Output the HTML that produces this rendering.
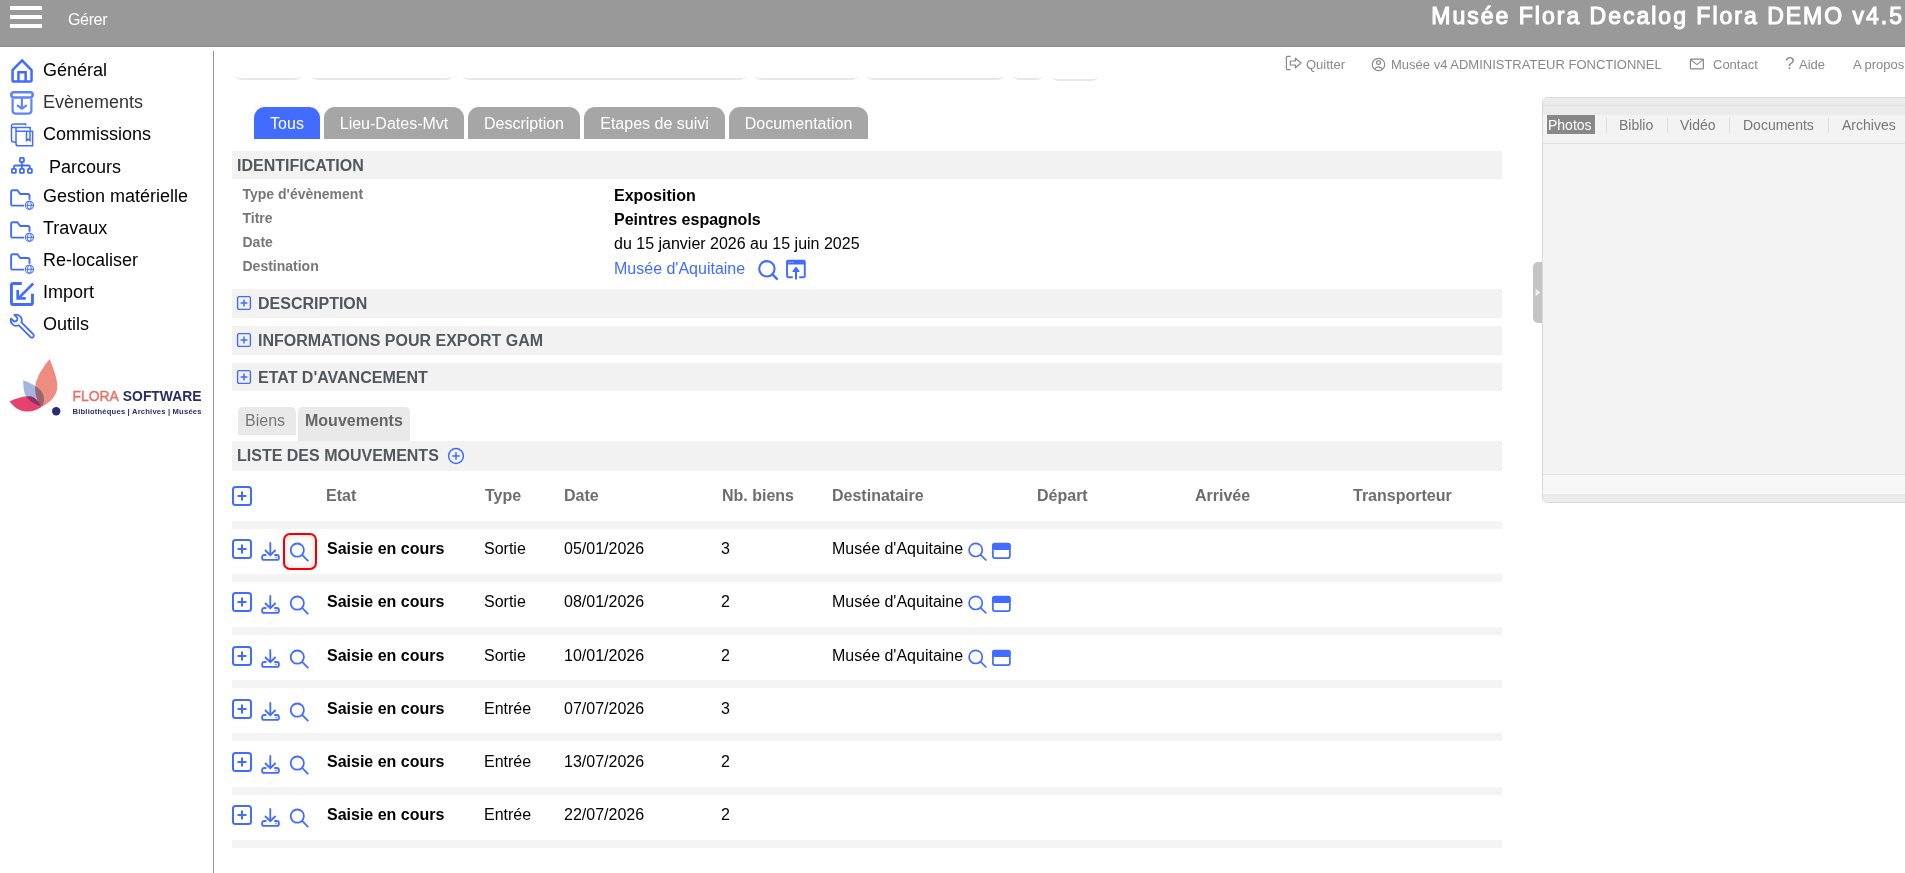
<!DOCTYPE html>
<html><head><meta charset="utf-8">
<style>
*{box-sizing:border-box;margin:0;padding:0}
html,body{width:1905px;height:873px;overflow:hidden;background:#fff;font-family:"Liberation Sans",sans-serif;position:relative}
.a{position:absolute}
.t{position:absolute;white-space:nowrap;line-height:normal}
.hdr{left:0;top:0;width:1905px;height:47px;background:#999}
.bar{left:10px;width:32px;height:4px;background:#fff}
.side .t{font-size:18px;color:#000}
.tab{top:107px;height:32px;border-radius:11px 11px 0 0;background:#a6a6a6;color:#fff;font-size:16px;text-align:center;line-height:33px}
.band{left:232px;width:1270px;background:#f2f2f2}
.sec{font-size:16px;font-weight:bold;color:#51585b}
.lbl{font-size:14px;font-weight:bold;color:#777;left:242.5px}
.val{font-size:16px;color:#000;left:614px}
.th{font-size:16px;font-weight:bold;color:#6d6d6d}
.td{font-size:16px;color:#000}
.stripe{left:232px;width:1270px;height:8px;background:#f4f4f4}
.nav{font-size:13px;color:#888}
.pill{top:75px;height:5px;border-radius:0 0 8px 8px/0 0 4px 4px;border-bottom:2px solid #e8e8e8}
svg{position:absolute;overflow:visible}
.ptab{font-size:14px;color:#777}
.psep{top:118px;width:1px;height:15px;background:#dcdcdc}
</style></head><body>

<!-- header -->
<div class="a hdr"></div>
<div class="a" style="left:0;top:46px;width:1905px;height:1px;background:#8e8e8e"></div>
<div class="a bar" style="top:6px"></div>
<div class="a bar" style="top:15px"></div>
<div class="a bar" style="top:24px"></div>
<div class="t" style="left:68px;top:11px;font-size:16px;letter-spacing:-0.35px;color:#fff">Gérer</div>
<div class="t" id="title" style="right:1px;top:3px;font-size:23px;letter-spacing:2px;-webkit-text-stroke:1.1px #fff;color:#fff">Musée Flora Decalog Flora DEMO v4.5</div>

<!-- sidebar -->
<div class="a" style="left:213px;top:51px;width:1px;height:822px;background:#999"></div>
<div class="side">
<div class="t" style="left:43px;top:60px">Général</div>
<div class="t" style="left:43px;top:92px;color:#333">Evènements</div>
<div class="t" style="left:43px;top:124px">Commissions</div>
<div class="t" style="left:49px;top:157px">Parcours</div>
<div class="t" style="left:43px;top:186px">Gestion matérielle</div>
<div class="t" style="left:43px;top:218px">Travaux</div>
<div class="t" style="left:43px;top:250px">Re-localiser</div>
<div class="t" style="left:43px;top:282px">Import</div>
<div class="t" style="left:43px;top:314px">Outils</div>
</div>

<!-- top nav -->
<div class="t nav" style="left:1306px;top:57px">Quitter</div>
<div class="t nav" style="left:1391px;top:57px">Musée v4 ADMINISTRATEUR FONCTIONNEL</div>
<div class="t nav" style="left:1713px;top:57px">Contact</div>
<div class="t nav" style="left:1785px;top:54px;font-size:17px">?</div>
<div class="t nav" style="left:1799px;top:57px">Aide</div>
<div class="t nav" style="left:1853px;top:57px">A propos</div>

<!-- pills -->
<div class="a pill" style="left:235px;width:67px"></div>
<div class="a pill" style="left:312px;width:141px"></div>
<div class="a pill" style="left:463px;width:283px"></div>
<div class="a pill" style="left:754px;width:104px"></div>
<div class="a pill" style="left:866px;width:138px"></div>
<div class="a pill" style="left:1013px;width:30px"></div>
<div class="a pill" style="left:1052px;width:46px;top:76px"></div>

<!-- tabs -->
<div class="a tab" style="left:254px;width:66px;background:#416cff">Tous</div>
<div class="a tab" style="left:324px;width:140px">Lieu-Dates-Mvt</div>
<div class="a tab" style="left:468px;width:112px">Description</div>
<div class="a tab" style="left:584px;width:141px">Etapes de suivi</div>
<div class="a tab" style="left:729px;width:139px">Documentation</div>

<!-- identification -->
<div class="a band" style="top:151px;height:28px"></div>
<div class="t sec" style="left:237px;top:157px">IDENTIFICATION</div>
<div class="t lbl" style="top:186px">Type d'évènement</div>
<div class="t lbl" style="top:210px">Titre</div>
<div class="t lbl" style="top:234px">Date</div>
<div class="t lbl" style="top:258px">Destination</div>
<div class="t val" style="top:187px;font-weight:bold">Exposition</div>
<div class="t val" style="top:211px;font-weight:bold">Peintres espagnols</div>
<div class="t val" style="top:235px">du 15 janvier 2026 au 15 juin 2025</div>
<div class="t val" style="top:260px;color:#416cff">Musée d'Aquitaine</div>

<div class="a band" style="top:289px;height:29px"></div>
<div class="t sec" style="left:258px;top:295px">DESCRIPTION</div>
<div class="a band" style="top:326px;height:29px"></div>
<div class="t sec" style="left:258px;top:332px">INFORMATIONS POUR EXPORT GAM</div>
<div class="a band" style="top:363px;height:28px"></div>
<div class="t sec" style="left:258px;top:369px">ETAT D'AVANCEMENT</div>

<!-- sub tabs -->
<div class="a" style="left:238px;top:407px;width:58px;height:28px;background:#e9e9e9;border-radius:5px 5px 0 0"></div>
<div class="t" style="left:245px;top:412px;font-size:16px;color:#777">Biens</div>
<div class="a" style="left:298px;top:407px;width:112px;height:34px;background:#e9e9e9;border-radius:5px 5px 0 0"></div>
<div class="t" style="left:305px;top:412px;font-size:16px;font-weight:bold;color:#666">Mouvements</div>

<div class="a band" style="top:441px;height:30px"></div>
<div class="t sec" style="left:237px;top:447px">LISTE DES MOUVEMENTS</div>

<!-- table header -->
<div class="t th" style="left:326px;top:487px">Etat</div>
<div class="t th" style="left:485px;top:487px">Type</div>
<div class="t th" style="left:564px;top:487px">Date</div>
<div class="t th" style="left:722px;top:487px">Nb. biens</div>
<div class="t th" style="left:832px;top:487px">Destinataire</div>
<div class="t th" style="left:1037px;top:487px">Départ</div>
<div class="t th" style="left:1195px;top:487px">Arrivée</div>
<div class="t th" style="left:1353px;top:487px">Transporteur</div>

<div class="a stripe" style="top:521px"></div>
<div class="a stripe" style="top:574px"></div>
<div class="a stripe" style="top:627px"></div>
<div class="a stripe" style="top:680px"></div>
<div class="a stripe" style="top:733px"></div>
<div class="a stripe" style="top:787px"></div>
<div class="a stripe" style="top:840px"></div>

<svg class="ic" style="left:231px;top:538px" width="22" height="22" viewBox="0 0 22 22"><rect x="2" y="2" width="18" height="18" rx="2.5" fill="none" stroke="#416cff" stroke-width="2"/><path d="M11 6.5v9M6.5 11h9" stroke="#416cff" stroke-width="2" fill="none"/></svg>
<svg class="ic" style="left:255px;top:528px" width="30" height="40" viewBox="0 0 30 40" fill="none" stroke="#416cff" stroke-width="1.8"><path d="M11.4 27H9.1a2 2 0 0 0-2 2v.9a2 2 0 0 0 2 2h12.8a2 2 0 0 0 2-2V29a2 2 0 0 0-2-2h-2.6"/><path d="M15.3 14.3V27.2M10 22l5.3 5.2 5.3-5.2"/><path d="M20.4 29.4h1.2" stroke-width="1.5"/></svg>
<svg class="ic" style="left:288px;top:541px" width="22" height="22" viewBox="0 0 22 22"><circle cx="9.3" cy="9.1" r="6.6" stroke="#416cff" stroke-width="1.8" fill="none"/><path d="M14.1 13.9l6.2 6.3" stroke="#416cff" stroke-width="1.8" fill="none"/></svg>
<div class="t td" style="left:327px;top:540px;font-weight:bold">Saisie en cours</div>
<div class="t td" style="left:484px;top:540px">Sortie</div>
<div class="t td" style="left:564px;top:540px">05/01/2026</div>
<div class="t td" style="left:721px;top:540px">3</div>
<div class="t td" style="left:832px;top:540px">Musée d'Aquitaine</div>
<svg class="ic" style="left:966px;top:541px" width="22" height="22" viewBox="0 0 22 22"><circle cx="9.7" cy="8.9" r="6.6" stroke="#416cff" stroke-width="1.7" fill="none"/><path d="M14.4 13.6l6 5.9" stroke="#416cff" stroke-width="1.7" fill="none"/></svg>
<svg class="ic" style="left:991px;top:541px" width="22" height="22" viewBox="0 0 22 22"><rect x="1.9" y="2.5" width="17" height="14.6" rx="2" stroke="#416cff" stroke-width="1.7" fill="none"/><rect x="1.5" y="2" width="18" height="7" rx="2" fill="#416cff"/></svg>
<svg class="ic" style="left:231px;top:591px" width="22" height="22" viewBox="0 0 22 22"><rect x="2" y="2" width="18" height="18" rx="2.5" fill="none" stroke="#416cff" stroke-width="2"/><path d="M11 6.5v9M6.5 11h9" stroke="#416cff" stroke-width="2" fill="none"/></svg>
<svg class="ic" style="left:255px;top:581px" width="30" height="40" viewBox="0 0 30 40" fill="none" stroke="#416cff" stroke-width="1.8"><path d="M11.4 27H9.1a2 2 0 0 0-2 2v.9a2 2 0 0 0 2 2h12.8a2 2 0 0 0 2-2V29a2 2 0 0 0-2-2h-2.6"/><path d="M15.3 14.3V27.2M10 22l5.3 5.2 5.3-5.2"/><path d="M20.4 29.4h1.2" stroke-width="1.5"/></svg>
<svg class="ic" style="left:288px;top:594px" width="22" height="22" viewBox="0 0 22 22"><circle cx="9.3" cy="9.1" r="6.6" stroke="#416cff" stroke-width="1.8" fill="none"/><path d="M14.1 13.9l6.2 6.3" stroke="#416cff" stroke-width="1.8" fill="none"/></svg>
<div class="t td" style="left:327px;top:593px;font-weight:bold">Saisie en cours</div>
<div class="t td" style="left:484px;top:593px">Sortie</div>
<div class="t td" style="left:564px;top:593px">08/01/2026</div>
<div class="t td" style="left:721px;top:593px">2</div>
<div class="t td" style="left:832px;top:593px">Musée d'Aquitaine</div>
<svg class="ic" style="left:966px;top:594px" width="22" height="22" viewBox="0 0 22 22"><circle cx="9.7" cy="8.9" r="6.6" stroke="#416cff" stroke-width="1.7" fill="none"/><path d="M14.4 13.6l6 5.9" stroke="#416cff" stroke-width="1.7" fill="none"/></svg>
<svg class="ic" style="left:991px;top:594px" width="22" height="22" viewBox="0 0 22 22"><rect x="1.9" y="2.5" width="17" height="14.6" rx="2" stroke="#416cff" stroke-width="1.7" fill="none"/><rect x="1.5" y="2" width="18" height="7" rx="2" fill="#416cff"/></svg>
<svg class="ic" style="left:231px;top:645px" width="22" height="22" viewBox="0 0 22 22"><rect x="2" y="2" width="18" height="18" rx="2.5" fill="none" stroke="#416cff" stroke-width="2"/><path d="M11 6.5v9M6.5 11h9" stroke="#416cff" stroke-width="2" fill="none"/></svg>
<svg class="ic" style="left:255px;top:635px" width="30" height="40" viewBox="0 0 30 40" fill="none" stroke="#416cff" stroke-width="1.8"><path d="M11.4 27H9.1a2 2 0 0 0-2 2v.9a2 2 0 0 0 2 2h12.8a2 2 0 0 0 2-2V29a2 2 0 0 0-2-2h-2.6"/><path d="M15.3 14.3V27.2M10 22l5.3 5.2 5.3-5.2"/><path d="M20.4 29.4h1.2" stroke-width="1.5"/></svg>
<svg class="ic" style="left:288px;top:648px" width="22" height="22" viewBox="0 0 22 22"><circle cx="9.3" cy="9.1" r="6.6" stroke="#416cff" stroke-width="1.8" fill="none"/><path d="M14.1 13.9l6.2 6.3" stroke="#416cff" stroke-width="1.8" fill="none"/></svg>
<div class="t td" style="left:327px;top:647px;font-weight:bold">Saisie en cours</div>
<div class="t td" style="left:484px;top:647px">Sortie</div>
<div class="t td" style="left:564px;top:647px">10/01/2026</div>
<div class="t td" style="left:721px;top:647px">2</div>
<div class="t td" style="left:832px;top:647px">Musée d'Aquitaine</div>
<svg class="ic" style="left:966px;top:648px" width="22" height="22" viewBox="0 0 22 22"><circle cx="9.7" cy="8.9" r="6.6" stroke="#416cff" stroke-width="1.7" fill="none"/><path d="M14.4 13.6l6 5.9" stroke="#416cff" stroke-width="1.7" fill="none"/></svg>
<svg class="ic" style="left:991px;top:648px" width="22" height="22" viewBox="0 0 22 22"><rect x="1.9" y="2.5" width="17" height="14.6" rx="2" stroke="#416cff" stroke-width="1.7" fill="none"/><rect x="1.5" y="2" width="18" height="7" rx="2" fill="#416cff"/></svg>
<svg class="ic" style="left:231px;top:698px" width="22" height="22" viewBox="0 0 22 22"><rect x="2" y="2" width="18" height="18" rx="2.5" fill="none" stroke="#416cff" stroke-width="2"/><path d="M11 6.5v9M6.5 11h9" stroke="#416cff" stroke-width="2" fill="none"/></svg>
<svg class="ic" style="left:255px;top:688px" width="30" height="40" viewBox="0 0 30 40" fill="none" stroke="#416cff" stroke-width="1.8"><path d="M11.4 27H9.1a2 2 0 0 0-2 2v.9a2 2 0 0 0 2 2h12.8a2 2 0 0 0 2-2V29a2 2 0 0 0-2-2h-2.6"/><path d="M15.3 14.3V27.2M10 22l5.3 5.2 5.3-5.2"/><path d="M20.4 29.4h1.2" stroke-width="1.5"/></svg>
<svg class="ic" style="left:288px;top:701px" width="22" height="22" viewBox="0 0 22 22"><circle cx="9.3" cy="9.1" r="6.6" stroke="#416cff" stroke-width="1.8" fill="none"/><path d="M14.1 13.9l6.2 6.3" stroke="#416cff" stroke-width="1.8" fill="none"/></svg>
<div class="t td" style="left:327px;top:700px;font-weight:bold">Saisie en cours</div>
<div class="t td" style="left:484px;top:700px">Entrée</div>
<div class="t td" style="left:564px;top:700px">07/07/2026</div>
<div class="t td" style="left:721px;top:700px">3</div>
<svg class="ic" style="left:231px;top:751px" width="22" height="22" viewBox="0 0 22 22"><rect x="2" y="2" width="18" height="18" rx="2.5" fill="none" stroke="#416cff" stroke-width="2"/><path d="M11 6.5v9M6.5 11h9" stroke="#416cff" stroke-width="2" fill="none"/></svg>
<svg class="ic" style="left:255px;top:741px" width="30" height="40" viewBox="0 0 30 40" fill="none" stroke="#416cff" stroke-width="1.8"><path d="M11.4 27H9.1a2 2 0 0 0-2 2v.9a2 2 0 0 0 2 2h12.8a2 2 0 0 0 2-2V29a2 2 0 0 0-2-2h-2.6"/><path d="M15.3 14.3V27.2M10 22l5.3 5.2 5.3-5.2"/><path d="M20.4 29.4h1.2" stroke-width="1.5"/></svg>
<svg class="ic" style="left:288px;top:754px" width="22" height="22" viewBox="0 0 22 22"><circle cx="9.3" cy="9.1" r="6.6" stroke="#416cff" stroke-width="1.8" fill="none"/><path d="M14.1 13.9l6.2 6.3" stroke="#416cff" stroke-width="1.8" fill="none"/></svg>
<div class="t td" style="left:327px;top:753px;font-weight:bold">Saisie en cours</div>
<div class="t td" style="left:484px;top:753px">Entrée</div>
<div class="t td" style="left:564px;top:753px">13/07/2026</div>
<div class="t td" style="left:721px;top:753px">2</div>
<svg class="ic" style="left:231px;top:804px" width="22" height="22" viewBox="0 0 22 22"><rect x="2" y="2" width="18" height="18" rx="2.5" fill="none" stroke="#416cff" stroke-width="2"/><path d="M11 6.5v9M6.5 11h9" stroke="#416cff" stroke-width="2" fill="none"/></svg>
<svg class="ic" style="left:255px;top:794px" width="30" height="40" viewBox="0 0 30 40" fill="none" stroke="#416cff" stroke-width="1.8"><path d="M11.4 27H9.1a2 2 0 0 0-2 2v.9a2 2 0 0 0 2 2h12.8a2 2 0 0 0 2-2V29a2 2 0 0 0-2-2h-2.6"/><path d="M15.3 14.3V27.2M10 22l5.3 5.2 5.3-5.2"/><path d="M20.4 29.4h1.2" stroke-width="1.5"/></svg>
<svg class="ic" style="left:288px;top:807px" width="22" height="22" viewBox="0 0 22 22"><circle cx="9.3" cy="9.1" r="6.6" stroke="#416cff" stroke-width="1.8" fill="none"/><path d="M14.1 13.9l6.2 6.3" stroke="#416cff" stroke-width="1.8" fill="none"/></svg>
<div class="t td" style="left:327px;top:806px;font-weight:bold">Saisie en cours</div>
<div class="t td" style="left:484px;top:806px">Entrée</div>
<div class="t td" style="left:564px;top:806px">22/07/2026</div>
<div class="t td" style="left:721px;top:806px">2</div>


<!-- sidebar icons -->
<svg style="left:9px;top:58px" width="26" height="26" viewBox="0 0 26 26" fill="none" stroke="#416cff" stroke-width="2.5" stroke-linejoin="round"><path d="M3.55 12.2L13.05 2.4L22.55 12.2V22.2a1.4 1.4 0 0 1-1.4 1.4H4.95a1.4 1.4 0 0 1-1.4-1.4Z"/><path d="M9.45 23.6V14.35h7.2V23.6" stroke-linejoin="miter"/></svg>
<svg style="left:9px;top:90px;opacity:.85" width="26" height="26" viewBox="0 0 26 26" fill="none" stroke="#416cff"><rect x="2.3" y="2.3" width="21.4" height="5.2" rx="2.4" stroke-width="2.6"/><path d="M3.6 8.6v12a3 3 0 0 0 3 3h12.8a3 3 0 0 0 3-3v-12" stroke-width="2.2"/><path d="M12.9 7.4V18.2M8 15.1l4.9 3.5 4.9-3.5" stroke-width="2.1"/></svg>
<svg style="left:8px;top:120px" width="30" height="30" viewBox="0 0 30 30" fill="none" stroke="#416cff" stroke-width="1.5"><path d="M17.6 5.6V3.9H5.6a2.1 2.1 0 0 0-2.1 2.1V19.8a2.1 2.1 0 0 0 2.1 2.1H8"/><path d="M3.5 7.5H22.2V10.2"/><path d="M8 7.5V23.7a2.1 2.1 0 0 0 2.1 2.1H24.6V11.3H8"/><path d="M18.5 11.3V20.6l1.75-1.3 1.75 1.3V11.3"/></svg>
<svg style="left:10px;top:155px" width="26" height="22" viewBox="0 0 26 22" fill="none" stroke="#416cff" stroke-width="1.8"><rect x="9.9" y="2.9" width="4" height="4" rx="0.6"/><rect x="1.9" y="13.9" width="4" height="4" rx="0.6"/><rect x="9.9" y="13.9" width="4" height="4" rx="0.6"/><rect x="17.9" y="13.9" width="4" height="4" rx="0.6"/><path d="M11.9 6.9V13.9M3.9 13.9V12a1.5 1.5 0 0 1 1.5-1.5h13a1.5 1.5 0 0 1 1.5 1.5v1.9"/></svg>
<svg style="left:9px;top:188px" width="28" height="26" viewBox="0 0 28 26" fill="none" stroke="#416cff"><path d="M20.5 11.8V7.4a1.4 1.4 0 0 0-1.4-1.4H11.3L8.3 2.2H3.6A1.45 1.45 0 0 0 2.15 3.65V16.2a1.4 1.4 0 0 0 1.4 1.4H15" stroke-width="1.9"/><circle cx="20.4" cy="17.3" r="4.1" stroke-width="1.1"/><path d="M16.3 17.3h8.2" stroke-width="1"/><ellipse cx="20.4" cy="17.3" rx="1.9" ry="4.1" stroke-width="1"/></svg>
<svg style="left:9px;top:220px" width="28" height="26" viewBox="0 0 28 26" fill="none" stroke="#416cff"><path d="M20.5 11.8V7.4a1.4 1.4 0 0 0-1.4-1.4H11.3L8.3 2.2H3.6A1.45 1.45 0 0 0 2.15 3.65V16.2a1.4 1.4 0 0 0 1.4 1.4H15" stroke-width="1.9"/><circle cx="20.4" cy="17.3" r="4.1" stroke-width="1.1"/><path d="M16.3 17.3h8.2" stroke-width="1"/><ellipse cx="20.4" cy="17.3" rx="1.9" ry="4.1" stroke-width="1"/></svg>
<svg style="left:9px;top:252px" width="28" height="26" viewBox="0 0 28 26" fill="none" stroke="#416cff"><path d="M20.5 11.8V7.4a1.4 1.4 0 0 0-1.4-1.4H11.3L8.3 2.2H3.6A1.45 1.45 0 0 0 2.15 3.65V16.2a1.4 1.4 0 0 0 1.4 1.4H15" stroke-width="1.9"/><circle cx="20.4" cy="17.3" r="4.1" stroke-width="1.1"/><path d="M16.3 17.3h8.2" stroke-width="1"/><ellipse cx="20.4" cy="17.3" rx="1.9" ry="4.1" stroke-width="1"/></svg>
<svg style="left:9px;top:281px" width="26" height="26" viewBox="0 0 26 26" fill="none" stroke="#416cff"><path d="M12.8 2.45H4.2a1.75 1.75 0 0 0-1.75 1.75V21.7a1.75 1.75 0 0 0 1.75 1.75H21.7a1.75 1.75 0 0 0 1.75-1.75V12.8" stroke-width="2.9"/><path d="M24.2 2.5L9.4 17.3" stroke-width="2.6"/><path d="M8.7 9.1V17.4H16.8" stroke-width="2.7"/></svg>
<svg style="left:8px;top:314px" width="26" height="26" viewBox="0 0 26 26"><path d="M10.6 11.2L22.6 23.2a2 2 0 0 0 2.8-2.8L13.4 8.4c.8-2.3.3-4.7-1.5-6.3-1.6-1.4-3.7-1.8-5.6-1.2l3.2 3.2-.6 2.8-2.8.6L3 4.4c-.6 1.9-.2 4 1.2 5.6 1.6 1.8 4 2.3 6.4 1.2z" stroke="#416cff" stroke-width="1.8" fill="none" stroke-linejoin="round"/></svg>

<!-- identification destination icons -->
<svg style="left:756px;top:258px" width="24" height="24" viewBox="0 0 24 24"><circle cx="10.9" cy="10.8" r="7.7" stroke="#416cff" stroke-width="2.1" fill="none"/><path d="M16.5 16.4l5.2 5.2" stroke="#416cff" stroke-width="2.2" fill="none"/></svg>
<svg style="left:785px;top:259px" width="22" height="22" viewBox="0 0 22 22"><path d="M7.8 18.3H3.2a1.2 1.2 0 0 1-1.2-1.2V3a1.2 1.2 0 0 1 1.2-1.2h15.4A1.2 1.2 0 0 1 19.8 3v14.1a1.2 1.2 0 0 1-1.2 1.2H14.2" stroke="#416cff" stroke-width="1.9" fill="none"/><rect x="1.6" y="1.4" width="18.6" height="4.2" rx="1" fill="#416cff"/><circle cx="3.8" cy="3.4" r="0.6" fill="#fff" opacity=".6"/><circle cx="5.8" cy="3.4" r="0.6" fill="#fff" opacity=".6"/><circle cx="7.8" cy="3.4" r="0.6" fill="#fff" opacity=".6"/><path d="M11 20.5V10.5" stroke="#416cff" stroke-width="2"/><path d="M8 12.4L11 8.3l3 4.1z" fill="#416cff" stroke="#416cff" stroke-width="1.2" stroke-linejoin="round"/></svg>

<!-- section plus icons -->
<svg style="left:236px;top:295px" width="16" height="16" viewBox="0 0 16 16"><rect x="1.6" y="1.6" width="12.8" height="12.8" rx="1.6" stroke="#416cff" stroke-width="1.4" fill="none"/><path d="M8 4.6v6.8M4.6 8h6.8" stroke="#416cff" stroke-width="1.5"/></svg>
<svg style="left:236px;top:332px" width="16" height="16" viewBox="0 0 16 16"><rect x="1.6" y="1.6" width="12.8" height="12.8" rx="1.6" stroke="#416cff" stroke-width="1.4" fill="none"/><path d="M8 4.6v6.8M4.6 8h6.8" stroke="#416cff" stroke-width="1.5"/></svg>
<svg style="left:236px;top:369px" width="16" height="16" viewBox="0 0 16 16"><rect x="1.6" y="1.6" width="12.8" height="12.8" rx="1.6" stroke="#416cff" stroke-width="1.4" fill="none"/><path d="M8 4.6v6.8M4.6 8h6.8" stroke="#416cff" stroke-width="1.5"/></svg>
<svg style="left:446.5px;top:447px" width="18" height="18" viewBox="0 0 18 18"><circle cx="9" cy="9" r="7.4" stroke="#416cff" stroke-width="1.5" fill="none"/><path d="M9 5.2v7.6M5.2 9h7.6" stroke="#416cff" stroke-width="1.5"/></svg>
<svg style="left:231px;top:485px" width="22" height="22" viewBox="0 0 22 22"><rect x="2" y="2" width="18" height="18" rx="2.5" fill="none" stroke="#416cff" stroke-width="2"/><path d="M11 6.5v9M6.5 11h9" stroke="#416cff" stroke-width="2" fill="none"/></svg>

<!-- red highlight -->
<div class="a" style="left:283px;top:533px;width:34px;height:37px;border:2.2px solid #f00000;border-radius:7px;box-shadow:inset 0 0 7px rgba(0,0,0,.16), 0 0 4px rgba(0,0,0,.08)"></div>

<!-- nav icons -->
<svg style="left:1285px;top:55px" width="18" height="16" viewBox="0 0 18 16"><path d="M5.6 1.4H2.4a1 1 0 0 0-1 1V13.6a1 1 0 0 0 1 1h3.2" stroke="#888" stroke-width="1.2" fill="none"/><path d="M5.4 6h5V3.2l5.6 4.8-5.6 4.8V10h-5z" stroke="#888" stroke-width="1.2" fill="none" stroke-linejoin="round"/></svg>
<svg style="left:1371px;top:57px" width="15" height="15" viewBox="0 0 15 15"><circle cx="7.5" cy="7.5" r="6.2" stroke="#888" stroke-width="1.2" fill="none"/><circle cx="7.5" cy="5.6" r="1.9" stroke="#888" stroke-width="1.2" fill="none"/><path d="M3.6 12.2c.8-1.6 2.2-2.4 3.9-2.4s3.1.8 3.9 2.4" stroke="#888" stroke-width="1.2" fill="none"/></svg>
<svg style="left:1689px;top:58px" width="16" height="12" viewBox="0 0 16 12"><rect x="1.4" y="1.2" width="13" height="9.6" rx="0.8" stroke="#888" stroke-width="1.2" fill="none"/><path d="M1.6 1.6l6.3 5 6.3-5" stroke="#888" stroke-width="1.2" fill="none"/></svg>

<!-- right panel -->
<div class="a" style="left:1533px;top:262px;width:10px;height:61px;background:#c4c4c4;border-radius:5px 0 0 5px"></div>
<svg style="left:1535px;top:288px" width="6" height="9" viewBox="0 0 6 9"><path d="M0.5 0.5L5.5 4.5L0.5 8.5Z" fill="#ececec"/></svg>
<div class="a" style="left:1542px;top:97px;width:380px;height:406px;border:1px solid #d9d9d9;border-radius:5px;background:#f3f3f3;overflow:hidden">
  <div class="a" style="left:0;top:0;width:100%;height:8px;background:#ebebeb;border-bottom:1px solid #dedede"></div>
  <div class="a" style="left:0;top:8px;width:100%;height:9px;background:#ebebeb"></div>
  <div class="a" style="left:0;top:45px;width:100%;height:1px;background:#e0e0e0"></div>
  <div class="a" style="left:0;top:376px;width:100%;height:1px;background:#e3e3e3"></div>
  <div class="a" style="left:0;top:377px;width:100%;height:19px;background:#f7f7f7"></div>
  <div class="a" style="left:0;top:395px;width:100%;height:1px;background:#fff"></div>
  <div class="a" style="left:0;top:396px;width:100%;height:1px;background:#e6e6e6"></div>
  <div class="a" style="left:0;top:397px;width:100%;height:10px;background:#ececec"></div>
</div>
<div class="a" style="left:1547px;top:115px;width:48px;height:19px;background:#888"></div>
<div class="t ptab" style="left:1548px;top:117px;color:#fff">Photos</div>
<div class="a psep" style="left:1606px"></div>
<div class="t ptab" style="left:1619px;top:117px">Biblio</div>
<div class="a psep" style="left:1667px"></div>
<div class="t ptab" style="left:1680px;top:117px">Vidéo</div>
<div class="a psep" style="left:1729px"></div>
<div class="t ptab" style="left:1743px;top:117px">Documents</div>
<div class="a psep" style="left:1828px"></div>
<div class="t ptab" style="left:1842px;top:117px">Archives</div>

<!-- logo -->
<svg style="left:0px;top:350px" width="210" height="75" viewBox="0 0 210 75">
  <path d="M49.7 9.1C53 18 57.5 28 57.3 37C57 46 50 53 41.5 56.7C37 51 34.5 43 35.3 36.4C36.5 27 43 17 49.7 9.1Z" fill="#ee8c82"/>
  <path d="M9.5 51.5C16 48 24 46 30 46.2C35 46.6 39.5 52 41.5 57.1C37 60 32 62 26 61.5C19 61 14 57 9.5 51.5Z" fill="#e5426f"/>
  <path d="M23.2 30.3C30 33 43 38 43.8 47C44.5 52 43 55 41.9 56.4C33 54 26 49 24.5 43C23.5 39 23.2 34 23.2 30.3Z" fill="#a4b6e0" style="mix-blend-mode:multiply"/>
  <circle cx="56.2" cy="61.2" r="4.2" fill="#2b2d72"/>
  <text transform="translate(72.5 50.8) scale(1 1.1)" font-family="Liberation Sans" font-size="13.9" fill="#ea6f66" stroke="#ea6f66" stroke-width="0.4">FLORA</text>
  <text transform="translate(122.8 50.8) scale(1 1.1)" font-family="Liberation Sans" font-weight="bold" font-size="13.9" fill="#2a2c6c">SOFTWARE</text>
  <text x="72.5" y="64.3" font-family="Liberation Sans" font-weight="bold" font-size="7.6" letter-spacing="0.2" fill="#2a2c6c">Bibliothèques | Archives | Musées</text>
</svg>
</body></html>
